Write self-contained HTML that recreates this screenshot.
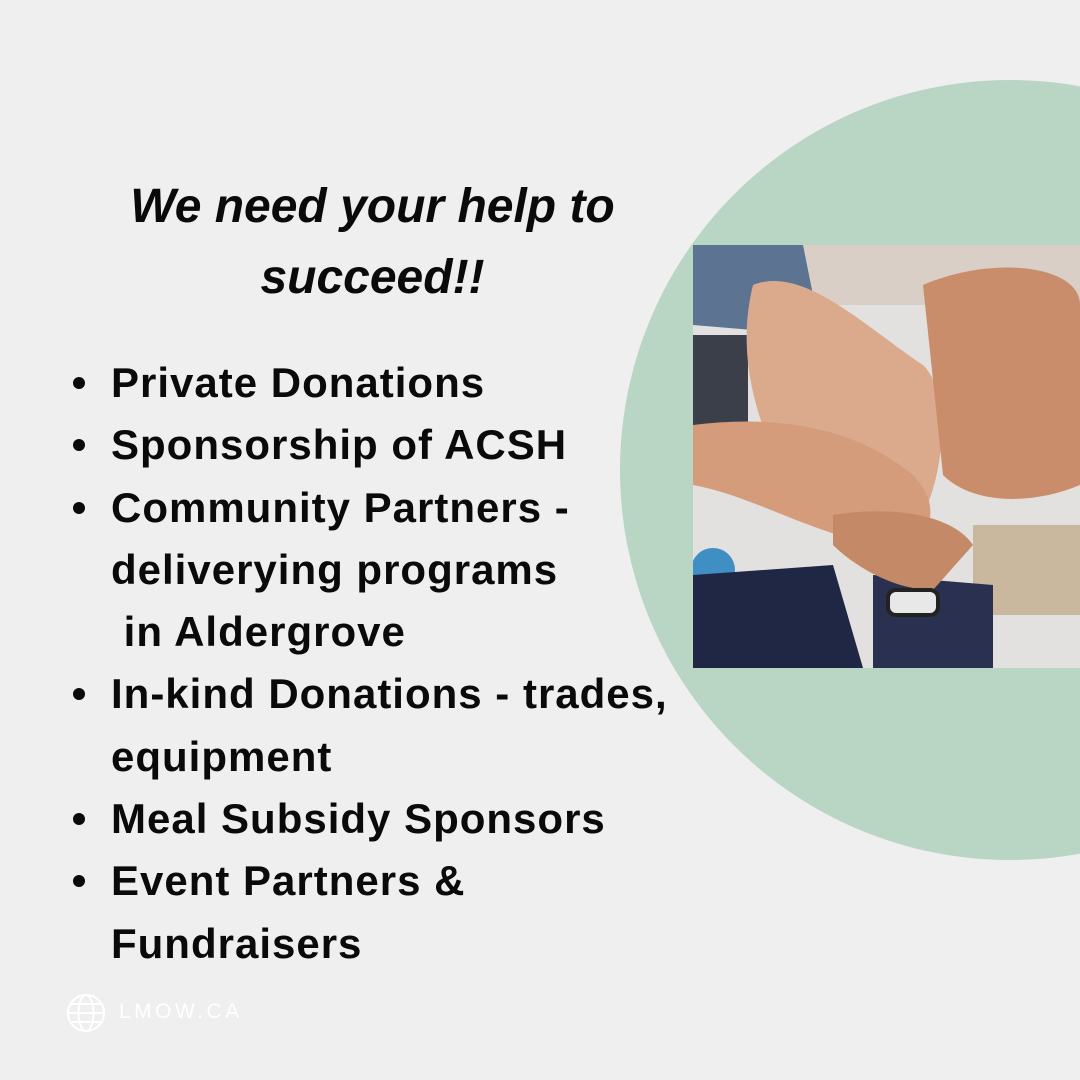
<!DOCTYPE html>
<html><head><meta charset="utf-8"><style>
html,body{margin:0;padding:0}
body{width:1080px;height:1080px;background:#efefef;position:relative;overflow:hidden;font-family:"Liberation Sans",sans-serif}
.circle{position:absolute;left:620px;top:80px;width:780px;height:780px;border-radius:50%;background:#b9d5c4}
.photo{position:absolute;left:693px;top:245px;width:387px;height:423px;overflow:hidden;background:#e6e4e2}
.title{position:absolute;left:60px;width:625px;top:171px;text-align:center;font-style:italic;font-weight:bold;font-size:48px;line-height:71px;color:#0a0a0a;letter-spacing:0px}
.list{position:absolute;left:111px;top:352px;font-weight:bold;font-size:42px;line-height:62.3px;color:#0a0a0a;letter-spacing:1px}
.list div{position:relative;white-space:nowrap}
.list .b:before{content:"";position:absolute;left:-38px;top:25px;width:12px;height:12px;border-radius:50%;background:#0a0a0a}
.foot{position:absolute;left:119px;top:1000px;font-size:21px;letter-spacing:3.5px;color:#fff}
</style></head><body>
<div class="circle"></div>
<div class="photo">
<svg width="387" height="423" viewBox="0 0 387 423">
<rect width="387" height="423" fill="#e3e1df"/>
<rect x="0" y="0" width="387" height="60" fill="#d9cfc6"/>
<rect x="0" y="90" width="55" height="150" fill="#3a3f4a"/>
<rect x="280" y="280" width="107" height="90" fill="#c9b79e"/>
<circle cx="340" cy="125" r="22" fill="#3f8fc4"/>
<circle cx="20" cy="325" r="22" fill="#3f8fc4"/>
<path d="M0 0 L110 0 L120 50 L60 85 L0 80Z" fill="#5c7491"/>
<path d="M0 330 L140 320 L170 423 L0 423Z" fill="#1f2745"/>
<path d="M180 330 L300 340 L300 423 L180 423Z" fill="#2a3150"/>
<path d="M60 40 C110 20 170 80 230 120 C260 150 250 230 230 270 C200 320 140 300 110 260 C70 200 40 120 60 40Z" fill="#dbaa8d"/>
<path d="M230 40 C300 10 387 20 387 60 L387 240 C340 260 280 260 250 230 Z" fill="#c98d6c"/>
<path d="M0 180 C80 170 160 180 220 230 C250 260 240 300 200 300 C140 300 60 250 0 240Z" fill="#d59c7c"/>
<path d="M140 270 C200 260 260 270 280 300 L240 345 C200 345 160 320 140 300Z" fill="#c48a68"/>
<rect x="195" y="345" width="50" height="25" rx="8" fill="#e8e8e8" stroke="#222" stroke-width="4"/>
</svg>
</div>
<div class="title">We need your help to<br>succeed!!</div>
<div class="list">
<div class="b">Private Donations</div>
<div class="b">Sponsorship of ACSH</div>
<div class="b">Community Partners -</div>
<div>deliverying programs</div>
<div>&nbsp;in Aldergrove</div>
<div class="b">In-kind Donations - trades,</div>
<div>equipment</div>
<div class="b">Meal Subsidy Sponsors</div>
<div class="b">Event Partners &amp;</div>
<div>Fundraisers</div>
</div>
<svg style="position:absolute;left:66px;top:993px" width="40" height="40" viewBox="0 0 40 40" fill="none" stroke="#fff" stroke-width="2">
<circle cx="20" cy="20" r="18"/><ellipse cx="20" cy="20" rx="7.5" ry="18"/><line x1="2" y1="20" x2="38" y2="20"/><line x1="5" y1="11" x2="35" y2="11"/><line x1="5" y1="29" x2="35" y2="29"/>
</svg>
<div class="foot">LMOW.CA</div>
</body></html>
